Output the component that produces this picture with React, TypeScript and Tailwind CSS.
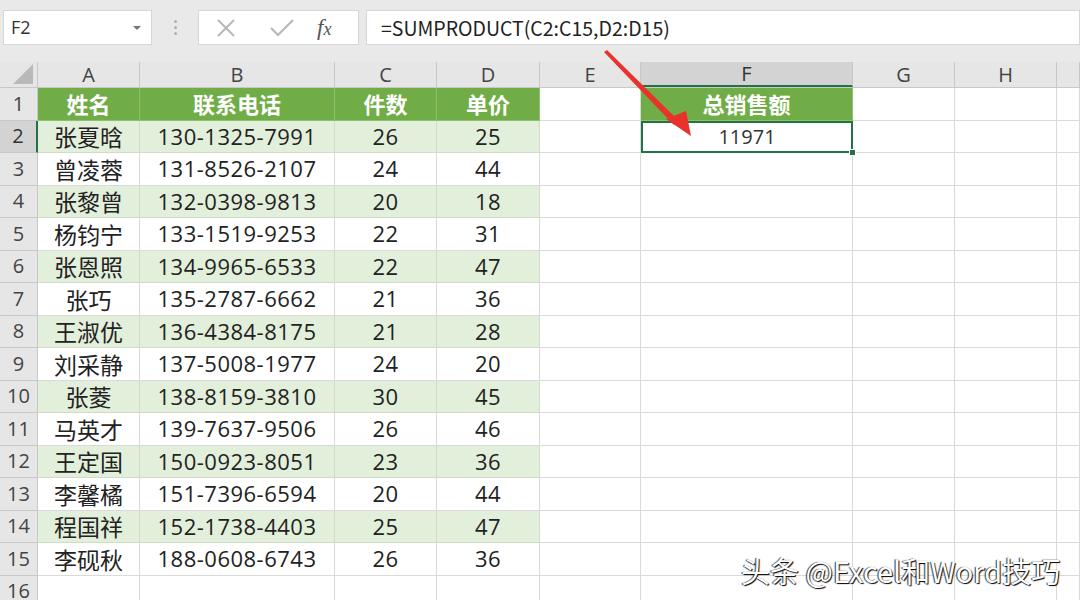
import React from 'react';

const wCls = ['w-[102px]', 'w-[195px]', 'w-[102px]', 'w-[103px]', 'w-[101px]', 'w-[212px]', 'w-[102px]', 'w-[102px]', 'w-[23px]'];
const letters = ['A', 'B', 'C', 'D', 'E', 'F', 'G', 'H', ''];

const data: [string, string, string, string][] = [
  ['张夏晗', '130-1325-7991', '26', '25'],
  ['曾凌蓉', '131-8526-2107', '24', '44'],
  ['张黎曾', '132-0398-9813', '20', '18'],
  ['杨钧宁', '133-1519-9253', '22', '31'],
  ['张恩照', '134-9965-6533', '22', '47'],
  ['张巧', '135-2787-6662', '21', '36'],
  ['王淑优', '136-4384-8175', '21', '28'],
  ['刘采静', '137-5008-1977', '24', '20'],
  ['张菱', '138-8159-3810', '30', '45'],
  ['马英才', '139-7637-9506', '26', '46'],
  ['王定国', '150-0923-8051', '23', '36'],
  ['李馨橘', '151-7396-6594', '20', '44'],
  ['程国祥', '152-1738-4403', '25', '47'],
  ['李砚秋', '188-0608-6743', '26', '36'],
];

const CN = "font-['Noto_Sans_CJK_SC','Liberation_Sans',sans-serif]";
const NUM = "font-['Open_Sans','Noto_Sans_CJK_SC',sans-serif]";

function Toolbar() {
  return (
    <div className="h-[62px] bg-[#e9e9e9] flex items-start pt-[10px] pl-[3px]">
      <div className="w-[149px] h-[35px] bg-white border border-[#d6d6d6] flex items-center justify-between pl-[7px] pr-[10px]">
        <span className={`text-[18px] text-[#333] ${NUM}`}>F2</span>
        <span className="w-0 h-0 border-l-[4px] border-r-[4px] border-t-[4px] border-l-transparent border-r-transparent border-t-[#777]" />
      </div>
      <div className="w-[46px] h-[35px] flex flex-col items-center justify-center gap-[3px]">
        <span className="w-[3px] h-[3px] rounded-full bg-[#b0b0b0]" />
        <span className="w-[3px] h-[3px] rounded-full bg-[#b0b0b0]" />
        <span className="w-[3px] h-[3px] rounded-full bg-[#b0b0b0]" />
      </div>
      <div className="w-[161px] h-[35px] bg-white border border-[#d6d6d6] flex items-center">
        <svg width="56" height="35" viewBox="0 0 56 35">
          <path d="M19 10 L35 26 M35 10 L19 26" stroke="#b8b8b8" strokeWidth="2" fill="none" />
        </svg>
        <svg width="56" height="35" viewBox="0 0 56 35">
          <path d="M16 18 L23 25 L38 10" stroke="#b8b8b8" strokeWidth="2.2" fill="none" />
        </svg>
        <span className="text-[23px] italic text-[#555] ml-[6px] font-['Liberation_Serif',serif] leading-none">
          f<span className="text-[18px]">x</span>
        </span>
      </div>
      <div className="flex-1 ml-[7px] h-[35px] bg-white border border-[#d6d6d6] flex items-center pl-[14px]">
        <span className={`text-[19.5px] text-[#222] ${CN}`}>=SUMPRODUCT(C2:C15,D2:D15)</span>
      </div>
    </div>
  );
}

function HeaderRow() {
  return (
    <div className={`flex h-[26px] bg-[#e6e6e6] border-b border-[#c8c8c8] ${NUM}`}>
      <div className="w-[38px] h-full relative border-r border-[#c8c8c8]">
        <svg className="absolute right-[4px] bottom-[3px]" width="20" height="20" viewBox="0 0 20 20">
          <polygon points="20,0 20,20 0,20" fill="#b9b9b9" />
        </svg>
      </div>
      {letters.map((l, i) => (
        <div
          key={i}
          className={
            l === 'F'
              ? `${wCls[i]} h-full flex items-center justify-center text-[20px] text-[#333] bg-[#d3d3d3] border-r border-[#c8c8c8] border-b-2 border-b-[#217346]`
              : `${wCls[i]} h-full flex items-center justify-center text-[20px] text-[#444] border-r border-[#c8c8c8]`
          }
        >
          {l}
        </div>
      ))}
    </div>
  );
}

function RowHead({ n, active }: { n: number; active?: boolean }) {
  return (
    <div
      className={
        active
          ? `w-[38px] shrink-0 h-full flex items-center justify-center text-[20px] text-[#333] bg-[#d3d3d3] border-b border-[#c8c8c8] border-r-2 border-r-[#217346] ${NUM}`
          : `w-[38px] shrink-0 h-full flex items-center justify-center text-[20px] text-[#444] bg-[#e6e6e6] border-b border-r border-[#c8c8c8] ${NUM}`
      }
    >
      {n}
    </div>
  );
}

function Row1() {
  const hdr = `h-full flex items-center justify-center text-[22px] font-bold text-white bg-[#70ad47] border-r border-b border-[#8cc06a] ${CN}`;
  const blank = 'h-full border-r border-b border-[#dadada]';
  return (
    <div className="flex h-[32.5px]">
      <RowHead n={1} />
      <div className={`${hdr} ${wCls[0]}`}>姓名</div>
      <div className={`${hdr} ${wCls[1]}`}>联系电话</div>
      <div className={`${hdr} ${wCls[2]}`}>件数</div>
      <div className={`${hdr} ${wCls[3]}`}>单价</div>
      <div className={`${blank} ${wCls[4]}`} />
      <div className={`${hdr} ${wCls[5]}`}>总销售额</div>
      <div className={`${blank} ${wCls[6]}`} />
      <div className={`${blank} ${wCls[7]}`} />
      <div className={`${blank} ${wCls[8]}`} />
    </div>
  );
}

function DataRow({ n, row }: { n: number; row: [string, string, string, string] }) {
  const green = n % 2 === 0;
  const cell = green
    ? 'h-full flex items-center justify-center text-[#222] bg-[#e2efda] border-r border-b border-[#d0dcc8]'
    : 'h-full flex items-center justify-center text-[#222] bg-white border-r border-b border-[#dadada]';
  const blank = 'h-full border-r border-b border-[#dadada]';
  const num = `${cell} ${NUM} text-[22px] tracking-[0.5px]`;
  return (
    <div className="flex h-[32.5px]">
      <RowHead n={n} active={n === 2} />
      <div className={`${cell} ${CN} text-[23px] ${wCls[0]}`}>{row[0]}</div>
      <div className={`${num} ${wCls[1]}`}>{row[1]}</div>
      <div className={`${num} ${wCls[2]}`}>{row[2]}</div>
      <div className={`${num} ${wCls[3]}`}>{row[3]}</div>
      <div className={`${blank} ${wCls[4]}`} />
      {n === 2 ? (
        <div
          className={`${wCls[5]} h-full relative flex items-center justify-center text-[20px] text-[#333] border-2 border-[#217346] ${NUM}`}
        >
          11971
          <span className="absolute right-[-5px] bottom-[-5px] w-[7px] h-[7px] bg-[#217346] border border-white" />
        </div>
      ) : (
        <div className={`${blank} ${wCls[5]}`} />
      )}
      <div className={`${blank} ${wCls[6]}`} />
      <div className={`${blank} ${wCls[7]}`} />
      <div className={`${blank} ${wCls[8]}`} />
    </div>
  );
}

function EmptyRow({ n }: { n: number }) {
  return (
    <div className="flex h-[32.5px]">
      <RowHead n={n} />
      {wCls.map((w, i) => (
        <div key={i} className={`h-full border-r border-b border-[#dadada] ${w}`} />
      ))}
    </div>
  );
}

export default function App() {
  return (
    <div className={`w-[1080px] h-[600px] overflow-hidden bg-white relative ${CN}`}>
      <Toolbar />
      <HeaderRow />
      <Row1 />
      {data.map((r, i) => (
        <DataRow key={i} n={i + 2} row={r} />
      ))}
      <EmptyRow n={16} />
      <svg className="absolute left-0 top-0 pointer-events-none" width="1080" height="600" viewBox="0 0 1080 600">
        <polygon points="604,52 607,50 679,121 674,125" fill="#e8322b" />
        <polygon points="666,119 686,111 691,136" fill="#e8322b" />
      </svg>
      <div className="absolute left-[741px] top-[549px] text-[29px] text-white whitespace-nowrap [text-shadow:1px_1px_1px_#000,-1px_0_1px_#333]">
        头条 @Excel和Word技巧
      </div>
    </div>
  );
}
